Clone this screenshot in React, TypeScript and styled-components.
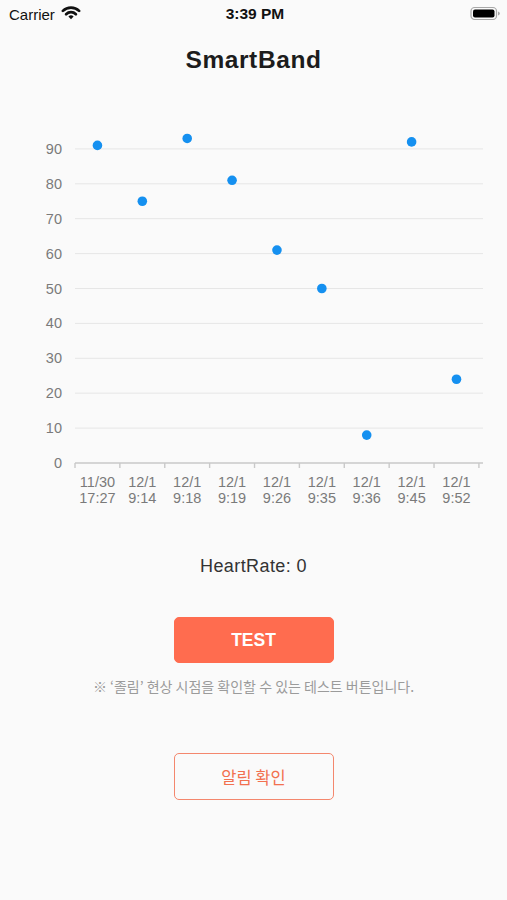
import styled, { createGlobalStyle } from 'styled-components';

const GlobalStyle = createGlobalStyle`
  html, body {
    margin: 0;
    padding: 0;
    background: #fafafa;
  }
  body {
    font-family: "Liberation Sans", Arial, sans-serif;
  }
`;

interface HeartPoint {
    date: string;
    time: string;
    value: number;
}

const points: HeartPoint[] = [
    { date: '11/30', time: '17:27', value: 91 },
    { date: '12/1', time: '9:14', value: 75 },
    { date: '12/1', time: '9:18', value: 93 },
    { date: '12/1', time: '9:19', value: 81 },
    { date: '12/1', time: '9:26', value: 61 },
    { date: '12/1', time: '9:35', value: 50 },
    { date: '12/1', time: '9:36', value: 8 },
    { date: '12/1', time: '9:45', value: 92 },
    { date: '12/1', time: '9:52', value: 24 },
];

// chart geometry, in page pixels
const AXIS_Y = 463;
const UNIT = 3.49;
const LEFT = 75;
const BAND = 44.88;
const GRID_END = 483;
const yOf = (v: number) => AXIS_Y - v * UNIT;
const ticks = [10, 20, 30, 40, 50, 60, 70, 80, 90];

const WifiIcon = () => (
    <svg width="20" height="15" viewBox="0 0 20 15">
        <path d="M1.9 5.9 A11.5 11.5 0 0 1 18.1 5.9" fill="none" stroke="#111" strokeWidth="2.7" strokeLinecap="round" />
        <path d="M5.1 9.2 A7 7 0 0 1 14.9 9.2" fill="none" stroke="#111" strokeWidth="2.7" strokeLinecap="round" />
        <path d="M10 14.2 L7.4 11.6 A3.6 3.6 0 0 1 12.6 11.6 Z" fill="#111" />
    </svg>
);

const BatteryIcon = () => (
    <svg width="31" height="15" viewBox="0 0 31 15">
        <rect x="1" y="1.5" width="25.5" height="12" rx="3.6" fill="none" stroke="#a8a8a8" strokeWidth="1.2" />
        <rect x="3" y="3.5" width="21.5" height="8" rx="2" fill="#000" />
        <path d="M28 5.6 Q29.8 6 29.8 7.5 Q29.8 9 28 9.4 Z" fill="#a8a8a8" />
    </svg>
);

const App = () => {
    return (
        <Screen>
            <GlobalStyle />
            <StatusBar>
                <Carrier>
                    Carrier
                    <WifiIcon />
                </Carrier>
                <Clock>3:39 PM</Clock>
                <Battery>
                    <BatteryIcon />
                </Battery>
            </StatusBar>

            <Title>SmartBand</Title>

            <ChartSvg width="507" height="400" viewBox="0 115 507 400">
                {ticks.map(t => (
                    <line key={`g-${t}`} x1={LEFT} x2={GRID_END} y1={yOf(t)} y2={yOf(t)} stroke="#e6e6e6" strokeWidth="1" />
                ))}
                {[0, ...ticks].map(t => (
                    <AxisLabel key={`l-${t}`} x={62} y={yOf(t) + 5} textAnchor="end">{t}</AxisLabel>
                ))}
                <line x1={LEFT} x2={GRID_END} y1={AXIS_Y} y2={AXIS_Y} stroke="#c9c9c9" strokeWidth="1.6" />
                {Array.from({ length: points.length + 1 }).map((_, i) => (
                    <line
                        key={`t-${i}`}
                        x1={LEFT + i * BAND}
                        x2={LEFT + i * BAND}
                        y1={AXIS_Y}
                        y2={AXIS_Y + 5}
                        stroke="#c9c9c9"
                        strokeWidth="1.4"
                    />
                ))}
                {points.map((p, i) => {
                    const cx = LEFT + BAND * (i + 0.5);
                    return (
                        <g key={`p-${i}`}>
                            <AxisLabel x={cx} y={487} textAnchor="middle">{p.date}</AxisLabel>
                            <AxisLabel x={cx} y={503} textAnchor="middle">{p.time}</AxisLabel>
                            <circle cx={cx} cy={yOf(p.value)} r="4.8" fill="#1590f0" />
                        </g>
                    );
                })}
            </ChartSvg>

            <HeartRate>HeartRate: 0</HeartRate>

            <ActionButton $filled>TEST</ActionButton>
            <Note>※ ‘졸림’ 현상 시점을 확인할 수 있는 테스트 버튼입니다.</Note>

            <ActionButton $gap={59}>알림 확인</ActionButton>
        </Screen>
    );
};

export default App;

const Screen = styled.div`
    min-height: 900px;
    background: #fafafa;
    display: flex;
    flex-direction: column;
    align-items: center;
`;

const StatusBar = styled.div`
    width: 100%;
    box-sizing: border-box;
    height: 28px;
    padding: 0 6px 0 9px;
    display: grid;
    grid-template-columns: 1fr auto 1fr;
    align-items: center;
    font-size: 15px;
    color: #111;
`;

const Carrier = styled.div`
    display: flex;
    align-items: center;
    gap: 6px;

    svg {
        margin-top: -3px;
    }
`;

const Clock = styled.div`
    font-weight: 700;
    font-size: 15.5px;
`;

const Battery = styled.div`
    display: flex;
    justify-content: flex-end;
    margin-top: -2px;
`;

const Title = styled.h1`
    margin: 18px 0 0;
    font-size: 24.5px;
    line-height: 28px;
    font-weight: 700;
    letter-spacing: 0.6px;
    color: #1c1c1c;
`;

const ChartSvg = styled.svg`
    display: block;
    margin-top: 41px;
`;

const AxisLabel = styled.text`
    font-family: "Liberation Sans", Arial, sans-serif;
    font-size: 14.5px;
    fill: #7a7a7a;
`;

const HeartRate = styled.div`
    margin-top: 40px;
    font-size: 18px;
    line-height: 22px;
    letter-spacing: 0.4px;
    color: #333;
`;

const ActionButton = styled.button<{ $filled?: boolean; $gap?: number }>`
    margin-top: ${props => props.$gap ?? 40}px;
    width: 160px;
    height: ${props => props.$filled ? 46 : 47}px;
    box-sizing: border-box;
    border-radius: 5px;
    border: 1.5px solid ${props => props.$filled ? '#ff6c4f' : '#f4876d'};
    background: ${props => props.$filled ? '#ff6c4f' : 'transparent'};
    color: ${props => props.$filled ? '#fff' : '#f2704f'};
    font-family: ${props => props.$filled
        ? '"Liberation Sans", Arial, sans-serif'
        : '"Noto Sans CJK KR", "Noto Sans", sans-serif'};
    font-size: ${props => props.$filled ? 17.5 : 16.5}px;
    font-weight: ${props => props.$filled ? 700 : 400};
    cursor: pointer;
    display: flex;
    align-items: center;
    justify-content: center;
`;

const Note = styled.p`
    margin: 15px 0 0;
    font-family: "Noto Sans CJK KR", "Noto Sans", sans-serif;
    font-size: 14px;
    line-height: 16px;
    color: #9b9b9b;
`;
